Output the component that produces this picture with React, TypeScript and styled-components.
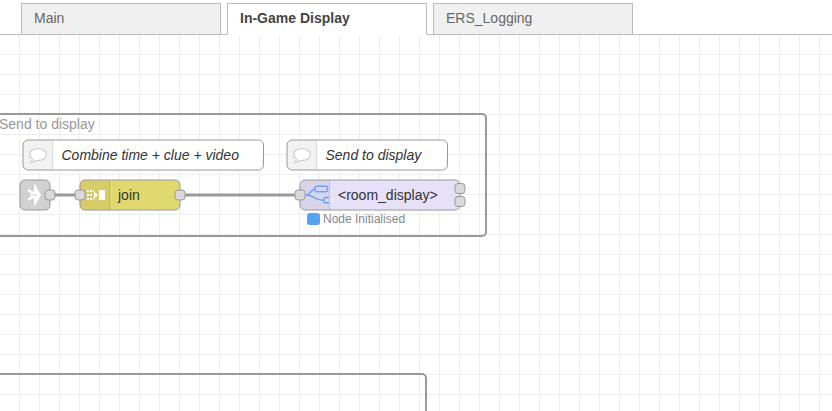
import React from 'react';
import styled, { createGlobalStyle } from 'styled-components';

const GlobalStyle = createGlobalStyle`
  * { box-sizing: border-box; }
  body {
    margin: 0;
    background: #fff;
    font-family: "Liberation Sans", Arial, sans-serif;
    font-size: 14px;
    overflow: hidden;
  }
`;

const Editor = styled.main`
  display: flex;
  flex-direction: column;
  width: 832px;
  height: 411px;
  overflow: hidden;
`;

const TabBar = styled.nav`
  display: flex;
  flex: none;
  align-items: flex-end;
  gap: 6px;
  height: 35px;
  padding-left: 21px;
  background: #fff;
  box-shadow: inset 0 -1px #bbb;
`;

const Tab = styled.div<{ $active?: boolean }>`
  width: 200px;
  height: 32px;
  padding-left: 12px;
  border: 1px solid #bbb;
  border-bottom-color: ${p => (p.$active ? '#fff' : '#bbb')};
  background: ${p => (p.$active ? '#fff' : '#f0f0f0')};
  color: ${p => (p.$active ? '#444' : '#666')};
  font-weight: ${p => (p.$active ? 700 : 400)};
  line-height: 29px;
`;

const Workspace = styled.section`
  position: relative;
  flex: 1;
  overflow: hidden;
  background-color: #fff;
  background-image:
    linear-gradient(90deg, #eee 1px, transparent 1px),
    linear-gradient(#eee 1px, transparent 1px);
  background-size: 20px 20px;
  background-position: 19px 19px;
`;

const Group = styled.div<{ $y: number; $w: number; $h: number }>`
  position: absolute;
  left: -10px;
  top: ${p => p.$y}px;
  width: ${p => p.$w}px;
  height: ${p => p.$h}px;
  padding: 1px 0 0 7px;
  border: 2px solid #999;
  border-radius: 5px;
  color: #999;
  line-height: 17px;
`;

const Wires = styled.svg`
  position: absolute;
  inset: 0;
  width: 100%;
  height: 100%;
`;

const NodeBox = styled.div<{ $x: number; $y: number; $w: number }>`
  position: absolute;
  left: ${p => p.$x}px;
  top: ${p => p.$y}px;
  display: flex;
  align-items: center;
  width: ${p => p.$w}px;
  height: 30px;
`;

const Frame = styled.svg`
  position: absolute;
  left: 0;
  top: 0;
  width: 100%;
  height: 100%;
  overflow: visible;
`;

const NodeLabel = styled.span<{ $italic?: boolean }>`
  position: relative;
  padding-left: ${p => (p.$italic ? 38.5 : 38)}px;
  color: #333;
  font-style: ${p => (p.$italic ? 'italic' : 'normal')};
  line-height: 30px;
  white-space: nowrap;
`;

const Status = styled.div`
  position: absolute;
  left: 307px;
  top: 177px;
  display: flex;
  align-items: center;
  gap: 3px;
  height: 13px;
  color: #888;
  font-size: 12px;
  white-space: nowrap;
`;

const StatusDot = styled.i`
  width: 13px;
  height: 12px;
  border-radius: 3px;
  background: #53a3f3;
`;

const BubbleIcon = () => (
  <path
    d="M15 8.500c4.800 0 8.500 2.700 8.500 6s-3.700 6-8.500 6c-.9 0-1.700-.1-2.500-.2-1.200 1.300-2.800 2.100-4.700 2.400 1.200-1 1.800-2.100 1.800-3.600-1.900-1.100-3.100-2.700-3.100-4.600 0-3.300 3.700-6 8.500-6z"
    fill="#fff"
    stroke="#ccc"
    strokeWidth="1.200"
  />
);

const LinkIcon = () => (
  <g>
    <path
      d="M14.300 3.200 21 15l-6.700 11.800-.6-8.300H12c-1 1.400-2.400 2.200-4.200 2.200v-2.400c1.800 0 3.100-1.400 3.100-3.300s-1.300-3.300-3.100-3.300V9.300c1.800 0 3.200.8 4.200 2.200h1.700z"
      fill="#fff"
    />
    <path d="M12 15h5" stroke="#d2d2d2" />
  </g>
);

const JoinIcon = () => (
  <g fill="#fff">
    {[10, 14, 18].map(y =>
      [7, 10].map(x => <rect key={`${x}-${y}`} x={x} y={y} width="2" height="2" />)
    )}
    <rect x="13" y="10" width="1" height="2" />
    <rect x="13" y="18" width="1" height="2" />
    <path d="M14 11.300 17.800 15 14 18.700z" />
    <rect x="19" y="10" width="6" height="10" />
  </g>
);

const SubflowIcon = () => (
  <g fill="none" stroke="#6ba3f8" strokeWidth="1.500">
    <path d="M6 15c5 0 4.500-6 9.500-6M6 15c9 0 8 5.500 17.500 5.500" />
    <rect x="15" y="6.300" width="12.500" height="5.500" rx="1.600" fill="#d9d6f5" />
    <path d="M29 17.600h-3.500q-1.700 0-1.700 1.600v2q0 1.600 1.700 1.600H29" />
  </g>
);

type FlowNodeProps = {
  x: number;
  y: number;
  w: number;
  fill: string;
  icon: React.ReactNode;
  label?: string;
  italic?: boolean;
  inputs?: number[];
  outputs?: number[];
};

function FlowNode({ x, y, w, fill, icon, label, italic, inputs = [], outputs = [] }: FlowNodeProps) {
  const ports = [...inputs.map(v => [0, v]), ...outputs.map(v => [w, v])];
  return (
    <NodeBox $x={x} $y={y} $w={w}>
      <Frame>
        <rect width={w} height="30" rx="5" fill={fill} />
        <path
          d={w > 30 ? 'M5 0H30V30H5Q0 30 0 25V5Q0 0 5 0Z' : 'M5 0H25Q30 0 30 5V25Q30 30 25 30H5Q0 30 0 25V5Q0 0 5 0Z'}
          fill="#000"
          fillOpacity=".05"
        />
        {w > 30 && <path d="M29.500 0V30" stroke="#000" strokeOpacity=".1" />}
        {icon}
        <rect width={w} height="30" rx="5" fill="none" stroke="#999" />
        {ports.map(([px, py]) => (
          <rect key={`${px}-${py}`} x={px - 5} y={py - 5} width="10" height="10" rx="3" fill="#d9d9d9" stroke="#999" />
        ))}
      </Frame>
      {label && <NodeLabel $italic={italic}>{label}</NodeLabel>}
    </NodeBox>
  );
}

export default function App() {
  return (
    <Editor>
      <GlobalStyle />
      <TabBar>
        <Tab>Main</Tab>
        <Tab $active>In-Game Display</Tab>
        <Tab>ERS_Logging</Tab>
      </TabBar>
      <Workspace>
        <Group $y={78} $w={497} $h={124}>Send to display</Group>
        <Group $y={338} $w={437} $h={124} />
        <Wires>
          <path d="M50 160H80M180 160H300" stroke="#999" strokeWidth="3" />
        </Wires>
        <FlowNode x={23} y={105} w={240.5} fill="#fff" icon={<BubbleIcon />} label="Combine time + clue + video" italic />
        <FlowNode x={287} y={105} w={160.5} fill="#fff" icon={<BubbleIcon />} label="Send to display" italic />
        <FlowNode x={20} y={145} w={30} fill="#ddd" icon={<LinkIcon />} outputs={[15]} />
        <FlowNode x={80} y={145} w={100} fill="#e2d96e" icon={<JoinIcon />} label="join" inputs={[15]} outputs={[15]} />
        <FlowNode x={300} y={145} w={160} fill="#e6e0f8" icon={<SubflowIcon />} label="<room_display>" inputs={[15]} outputs={[8.5, 21.5]} />
        <Status>
          <StatusDot />
          Node Initialised
        </Status>
      </Workspace>
    </Editor>
  );
}
